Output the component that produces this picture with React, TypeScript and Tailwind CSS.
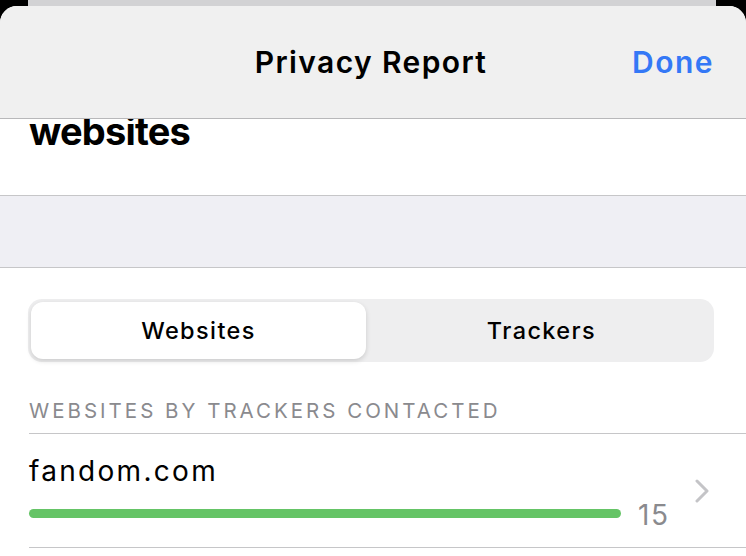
import React from "react";

export default function App() {
  return (
    <div className="w-[746px] h-[556px] overflow-hidden bg-black relative" style={{ fontFamily: "Inter, 'Noto Sans', sans-serif" }}>
      <div className="absolute left-[28px] right-[30px] top-0 h-[10px] bg-[#d2d2d4]" />
      <div className="absolute left-0 right-0 top-[6px] bottom-0 rounded-t-[17px] overflow-hidden bg-white flex flex-col">
        <div className="h-[113px] shrink-0 bg-[#f0f0f0] border-b border-[#b8b8ba] relative">
          <div className="absolute left-0 right-0 top-[41px] text-center pr-[4px] text-[30px] font-semibold text-black tracking-[1.4px] leading-none">Privacy Report</div>
          <div className="absolute right-[32px] top-[41px] text-[30px] font-semibold text-[#3478f6] leading-none tracking-[1.5px]">Done</div>
        </div>
        <div className="h-[77px] shrink-0 bg-white border-b border-[#c6c6c8] relative overflow-hidden">
          <div className="absolute left-[29px] top-[-7px] text-[38px] font-bold text-black leading-none tracking-[-0.8px]">websites</div>
        </div>
        <div className="h-[72px] shrink-0 bg-[#efeff4] border-b border-[#c6c6c8]" />
        <div className="pl-[28px] pr-[32px] pt-[31px]">
          <div className="h-[63px] rounded-[14px] bg-[#eeeeef] p-[3px] flex">
            <div className="w-[335px] rounded-[12px] bg-white shadow-[0_2px_5px_rgba(0,0,0,0.15)] flex items-center justify-center text-[23.5px] font-medium text-black tracking-[1.4px]">Websites</div>
            <div className="flex-1 pl-[6px] flex items-center justify-center text-[23.5px] font-medium text-black tracking-[1.4px]">Trackers</div>
          </div>
        </div>
        <div className="pl-[29px] mt-[39px]">
          <div className="text-[20.5px] text-[#8a8a8e] leading-none tracking-[3px] pb-[11px] border-b border-[#c6c6c8]">WEBSITES BY TRACKERS CONTACTED</div>
          <div className="flex items-start h-[114px] border-b border-[#c6c6c8] pt-[23px] pr-[35px]">
            <div className="flex-1 flex flex-col">
              <div className="text-[28px] text-black leading-none tracking-[2.3px]">fandom.com</div>
              <div className="flex items-center mt-[13px]">
                <div className="w-[592px] h-[9px] rounded-full bg-[#65c466]" />
                <div className="ml-[17px] text-[28px] text-[#8a8a8e] leading-none mt-[3px] tracking-[1.5px]">15</div>
              </div>
            </div>
            <svg width="18" height="24" viewBox="0 0 18 24" className="mt-[22px]">
              <path d="M4 2 L14 12 L4 22" fill="none" stroke="#c4c4c7" strokeWidth="3" strokeLinecap="round" strokeLinejoin="round" />
            </svg>
          </div>
        </div>
      </div>
    </div>
  );
}
